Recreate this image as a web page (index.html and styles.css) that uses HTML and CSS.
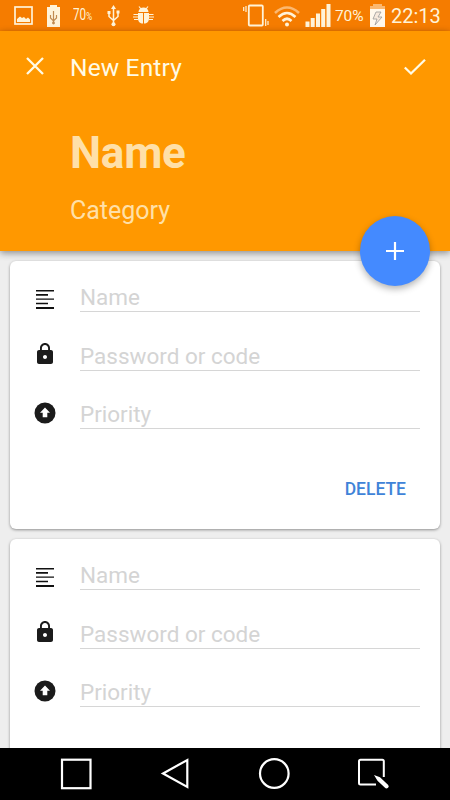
FILE: index.html
```html
<!DOCTYPE html>
<html lang="en">
<head>
<meta charset="utf-8">
<title>New Entry</title>
<link rel="stylesheet" href="styles.css">
</head>
<body>
<svg class="symbols" width="0" height="0" aria-hidden="true">
  <symbol id="i-list" viewBox="0 0 24 24"><path d="M3 3h18v1.500H3zM3 7h12v1.800H3zM3 11.600h18v1.200H3zM3 15.800h12v1.500H3zM3 20h18v2H3z" fill="#111"/></symbol>
  <symbol id="i-lock" viewBox="0 0 24 24"><path d="M18 8h-1V6c0-2.760-2.240-5-5-5S7 3.240 7 6v2H6c-1.100 0-2 .9-2 2v10c0 1.100.9 2 2 2h12c1.100 0 2-.9 2-2V10c0-1.100-.9-2-2-2zm-6 9c-1.100 0-2-.9-2-2s.9-2 2-2 2 .9 2 2-.9 2-2 2zm3.100-9H8.900V6c0-1.710 1.390-3.100 3.100-3.100s3.100 1.390 3.100 3.100z" fill="#1b1b1b"/></symbol>
  <symbol id="i-up" viewBox="0 0 24 24"><circle cx="12" cy="12" r="10.500" fill="#1b1b1b"/><path d="M12 6.500l5 5.200h-2.700v4.600H9.700v-4.600H7z" fill="#fff"/></symbol>
</svg>
<div class="screen">
  <div class="status">
    <svg class="s-pic" viewBox="14 6 19 20" width="19" height="20"><rect x="15" y="7" width="17" height="17" fill="none" stroke="#fff3d8" stroke-width="1.700"/><path d="M17 22v-3l3-2.500 2 1.500 2-1 2 2 2-1.500 2 2V22z" fill="#fff3d8"/></svg>
    <svg class="s-bat" viewBox="47 4 13 22" width="13" height="22"><path d="M50 4h7v2h3v20H47V6h3z" fill="#fff3d8"/><path d="M53.500 10v13M50.500 14v3l3 3 3-3v-3" fill="none" stroke="#c08a50" stroke-width="1.200"/><circle cx="53.500" cy="22" r="1.400" fill="#c08a50"/></svg>
    <span class="s-small">70<small>%</small></span>
    <svg class="s-usb" viewBox="107 5 13 22" width="13" height="22"><path d="M113.500 7v17M109 13v3.500l4.500 4 4.500-4V12" fill="none" stroke="#fff3d8" stroke-width="1.500"/><path d="M113.500 5l2.500 4h-5zM107.500 11h3v3h-3zM116.500 10.500h3v3h-3z" fill="#fff3d8"/><circle cx="113.500" cy="24.300" r="2" fill="#fff3d8"/></svg>
    <svg class="s-bug" viewBox="133 6 21 19" width="21" height="19"><path d="M138.500 12a5 4.500 0 0 1 10 0zM138 13h5v10.500c-3 0-5-2-5-5zM144 13h5v5.500c0 3-2 5-5 5z" fill="#fff3d8"/><path d="M141 9l-2-2.500M146 9l2-2.500M138 14.500h-4.500M138 17h-5M138 19.500h-4M149 14.500h4.500M149 17h5M149 19.500h4" stroke="#fff3d8" stroke-width="1.200"/></svg>
    <div class="grow"></div>
    <svg class="s-vib" viewBox="243 4 26 24" width="26" height="24"><rect x="248.800" y="5.500" width="14" height="20" rx="1" fill="none" stroke="#fff3d8" stroke-width="1.800"/><path d="M246 6v6M243.700 7v4M265.700 19v7M268 21v4" stroke="#fff3d8" stroke-width="1.200"/></svg>
    <svg class="s-wifi" viewBox="274 5 26 22" width="26" height="22"><g fill="none" stroke-width="2.600"><path d="M275 13q12-11 24 0" stroke="#fbb870"/><path d="M278.500 17q8.500-8 17 0M282.500 21q4.500-4.500 9 0" stroke="#fff3d8"/></g><circle cx="287" cy="24.500" r="2" fill="#fff3d8"/></svg>
    <svg class="s-sig" viewBox="305 4 26 23" width="26" height="23"><path d="M305.500 21.500h4V27h-4zM310.700 18h4v9h-4zM316 13.500h4V27h-4zM321.200 9h4v18h-4zM326.500 4h4v23h-4z" fill="#fff3d8"/></svg>
    <span class="s-pct">70%</span>
    <svg class="s-chg" viewBox="370 4 15 23" width="15" height="23"><path d="M373 4h9v2h3v4h-15V6h3z" fill="#fbb870"/><path d="M370 9h15v18h-15z" fill="#fff8ec"/><path d="M376 12l-3 7h4l-2 6 7-8h-4l3-5z" fill="#f7e9dc" stroke="#999" stroke-width=".8"/></svg>
    <span class="s-time">22:13</span>
  </div>
  <header class="header">
    <div class="bar">
      <svg class="close" viewBox="0 0 20 20" width="20" height="20"><path d="M2 1l16 16M18 1L2 17" stroke="#fffbe6" stroke-width="2.300"/></svg>
      <h1 class="title">New Entry</h1>
      <svg class="check" viewBox="404 57 23 19" width="23" height="19"><path d="M404.800 66.500l6.200 6L425 58.800" fill="none" stroke="#fffbe6" stroke-width="2.300"/></svg>
    </div>
    <div class="name">Name</div>
    <div class="category">Category</div>
    <button class="fab" aria-label="Add"><svg viewBox="0 0 18 18" width="18" height="18"><path d="M9 0v18M0 9h18" stroke="#fff" stroke-width="2.200"/></svg></button>
  </header>
  <main class="list">
    <section class="card">
      <div class="row"><svg class="ico ico-list"><use href="#i-list"/></svg><div class="field"><span>Name</span></div></div>
      <div class="row"><svg class="ico ico-lock"><use href="#i-lock"/></svg><div class="field"><span>Password or code</span></div></div>
      <div class="row"><svg class="ico"><use href="#i-up"/></svg><div class="field"><span>Priority</span></div></div>
      <div class="actions"><span>DELETE</span></div>
    </section>
    <section class="card">
      <div class="row"><svg class="ico ico-list"><use href="#i-list"/></svg><div class="field"><span>Name</span></div></div>
      <div class="row"><svg class="ico ico-lock"><use href="#i-lock"/></svg><div class="field"><span>Password or code</span></div></div>
      <div class="row"><svg class="ico"><use href="#i-up"/></svg><div class="field"><span>Priority</span></div></div>
    </section>
  </main>
  <nav class="nav">
    <svg viewBox="60 758 32 32" width="32" height="32"><rect x="62" y="759.700" width="28.500" height="28.500" fill="none" stroke="#fff" stroke-width="2.200"/></svg>
    <svg viewBox="160 758 30 32" width="30" height="32"><path d="M187.300 760v27L163 773.500z" fill="none" stroke="#fff" stroke-width="2.200"/></svg>
    <svg viewBox="258 758 32 32" width="32" height="32"><circle cx="274.300" cy="773.500" r="14.300" fill="none" stroke="#fff" stroke-width="2.200"/></svg>
    <svg viewBox="358 758 33 32" width="33" height="32"><path d="M376 784.500h-15.500q-1.500 0-1.500-1.500v-21.800q0-1.500 1.500-1.500h21.800q1.500 0 1.500 1.500V777" fill="none" stroke="#fff" stroke-width="2"/><path d="M374 775l6 2.200 8.200 7.800q1.300 2-.4 3t-2.800-.3l-7.500-7z" fill="#fff"/></svg>
  </nav>
</div>
</body>
</html>
```

FILE: styles.css
```css
* { box-sizing: border-box; }
body { margin: 0; font-family: Roboto, sans-serif; }
.symbols { position: absolute; }
svg { display: block; flex: none; }
.screen { width: 450px; height: 800px; display: flex; flex-direction: column; overflow: hidden; background: #eee; }

.status { height: 31px; flex: none; display: flex; align-items: center; padding: 0 9px 0 14px; background: #f57c00; color: #fff3d8; white-space: nowrap; }
.grow { flex: 1; }
.s-bat { margin-left: 14px; }
.s-small { width: 20px; margin-left: 13px; font: 16px/30px Roboto, sans-serif; transform: scaleX(.73); transform-origin: left; }
.s-small small { font-size: 11px; }
.s-usb { margin-left: 14px; }
.s-bug { margin-left: 13px; }
.s-wifi { margin-left: 5px; }
.s-sig { margin-left: 5px; }
.s-pct { width: 30px; margin-left: 4px; font-size: 15.500px; line-height: 32px; letter-spacing: -.1px; }
.s-chg { margin-left: 5px; }
.s-time { width: 50px; margin-left: 6px; font-size: 20px; line-height: 32px; }

.header { height: 220px; flex: none; position: relative; z-index: 1; background: #ff9800; box-shadow: 0 2px 7px rgba(0, 0, 0, .42); }
.bar { display: flex; align-items: center; height: 72px; padding: 0 23px 0 25px; }
.title { flex: 1; margin: 0 0 0 25px; padding-top: 1px; font-size: 24.500px; line-height: 30px; font-weight: 400; letter-spacing: .15px; color: #fffbe6; }
.name { padding: 24px 0 0 70px; font-size: 44px; line-height: 52px; font-weight: 700; letter-spacing: -.2px; color: #ffe0a8; }
.category { padding: 17px 0 0 70px; font-size: 25px; line-height: 30px; color: #ffe0a8; }
.fab { position: absolute; right: 20px; bottom: -35px; width: 70px; height: 70px; border: 0; padding: 0; border-radius: 50%; background: #448aff; display: grid; place-items: center; box-shadow: 0 3px 7px rgba(0, 0, 0, .3); }

.list { flex: 1; min-height: 0; overflow: hidden; display: flex; flex-direction: column; gap: 10px; padding: 10px; }
.card { height: 268px; flex: none; padding: 0 20px 0 23px; border-radius: 6px; background: #fff; box-shadow: 0 1px 3px rgba(0, 0, 0, .4); }
.row { display: flex; height: 58.500px; align-items: flex-end; }
.row:first-child { height: 51px; }
.ico { width: 24px; height: 24px; margin-bottom: 4px; }
.ico-list { margin-bottom: 1px; }
.ico-lock { margin-bottom: 5px; }
.field { flex: 1; height: 36px; margin-left: 23px; border-bottom: 1px solid #d6d6d6; font-size: 22.500px; line-height: 42px; color: #d4d4d4; white-space: nowrap; }
.actions { display: flex; justify-content: flex-end; padding: 47px 14px 0 0; font-size: 17.500px; line-height: 26px; font-weight: 500; color: #3f83d8; }

.nav { height: 52px; flex: none; display: flex; align-items: center; gap: 68px; padding: 0 60px; background: #000; }
```
